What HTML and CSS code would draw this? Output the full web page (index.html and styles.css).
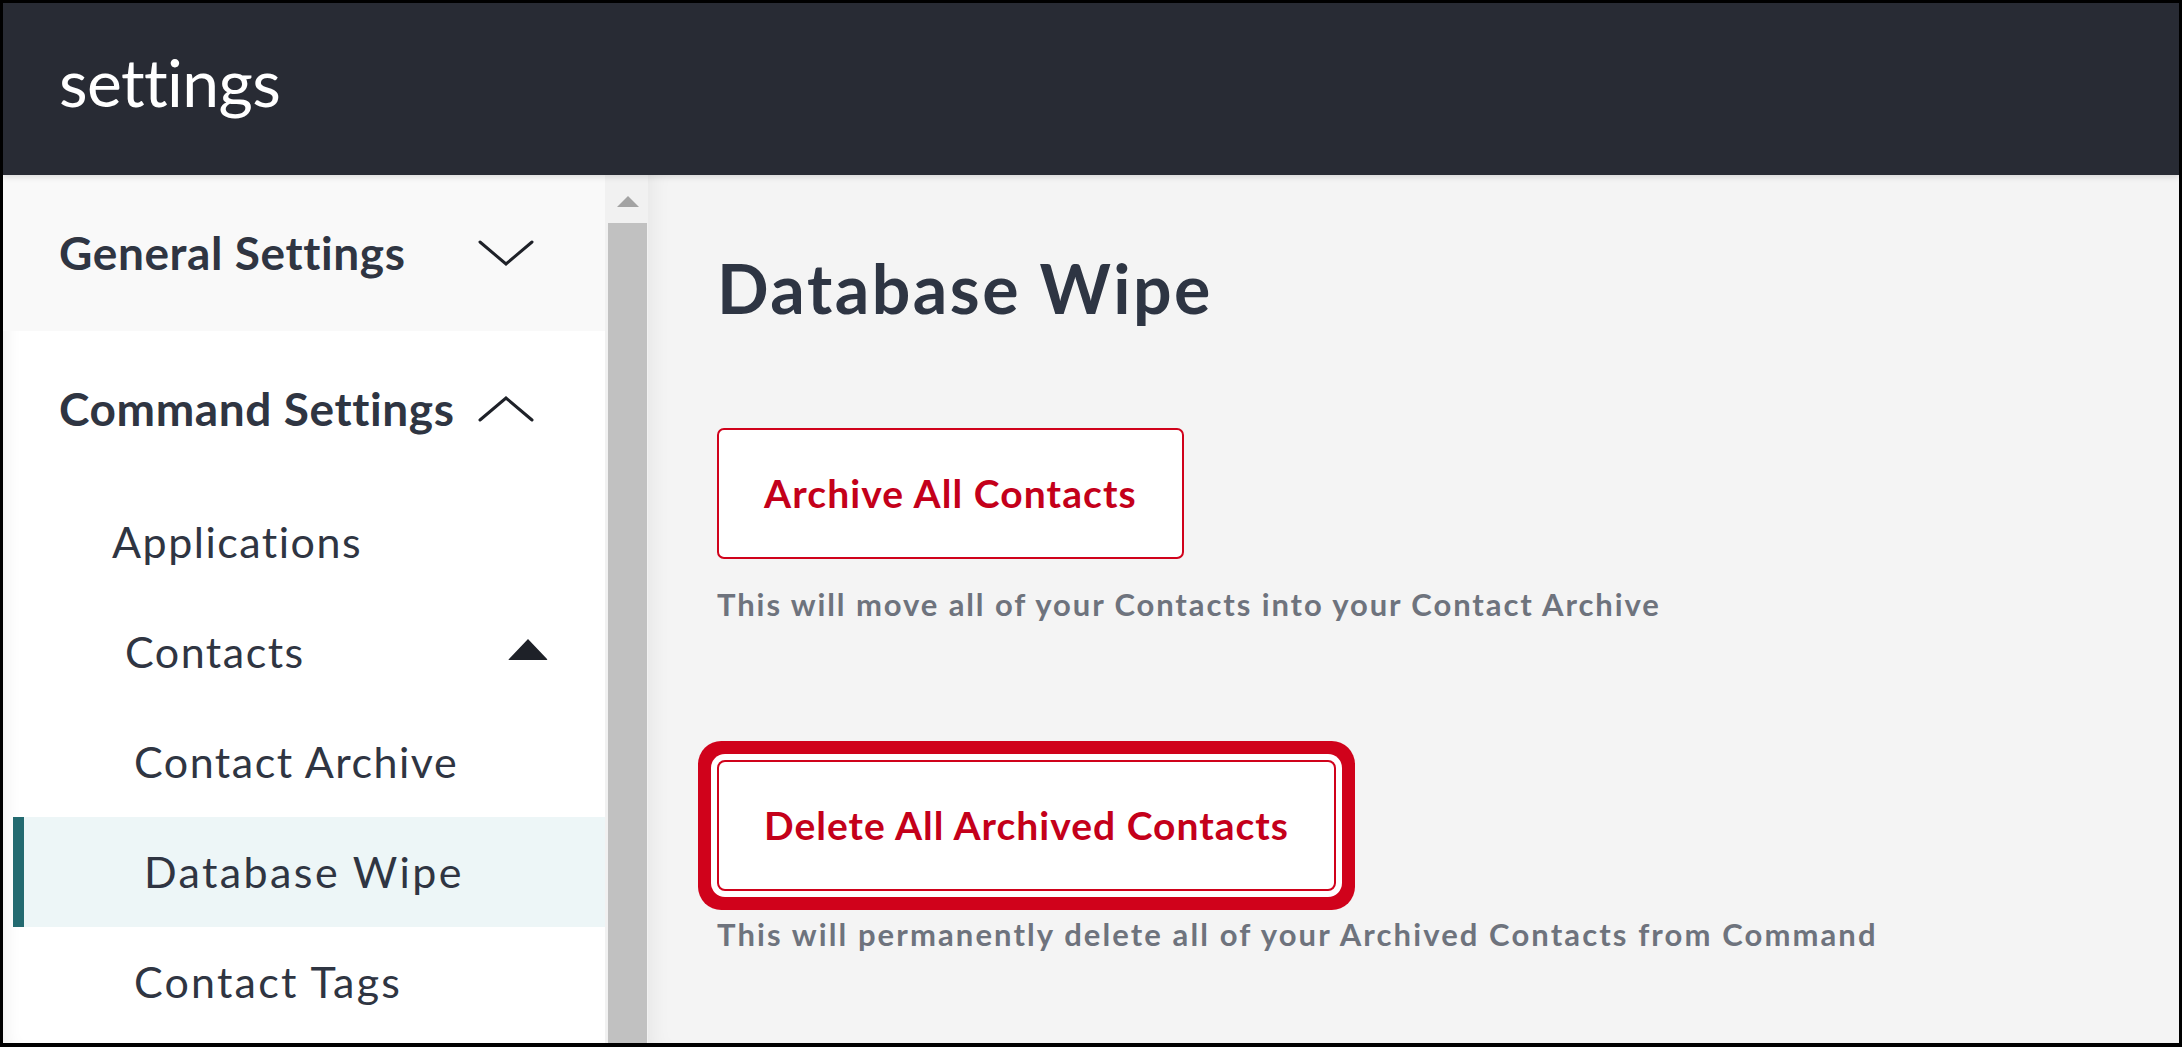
FILE: index.html
```html
<!DOCTYPE html>
<html lang="en">
<head>
<meta charset="utf-8">
<title>settings</title>
<link rel="stylesheet" href="styles.css">
</head>
<body>
<div class="frame">
  <header class="topbar">
    <h1 class="topbar-title">settings</h1>
  </header>
  <div class="body">
    <nav class="sidebar">
      <div class="group group-general">
        <span class="group-title">General Settings</span>
        <svg class="chev" viewBox="0 0 56 26" aria-hidden="true"><polyline points="2,2 28,24 54,2"/></svg>
      </div>
      <div class="group group-command">
        <span class="group-title">Command Settings</span>
        <svg class="chev" viewBox="0 0 56 26" aria-hidden="true"><polyline points="2,24 28,2 54,24"/></svg>
      </div>
      <div class="item item-apps">Applications</div>
      <div class="item item-contacts">
        <span>Contacts</span>
        <svg class="tri" viewBox="0 0 42 23" aria-hidden="true"><path d="M21 1 L40 21 Q41 22 39.5 22 L2.5 22 Q1 22 2 21 Z"/></svg>
      </div>
      <div class="item item-sub">Contact Archive</div>
      <div class="item item-sub item-active">Database Wipe</div>
      <div class="item item-sub item-tags">Contact Tags</div>
    </nav>
    <div class="scrollbar">
      <div class="scroll-up"></div>
      <div class="scroll-thumb"></div>
    </div>
    <main class="main">
      <h2 class="page-title">Database Wipe</h2>
      <button class="action-btn btn-archive">Archive All Contacts</button>
      <p class="action-desc">This will move all of your Contacts into your Contact Archive</p>
      <button class="action-btn btn-delete">Delete All Archived Contacts</button>
      <p class="action-desc desc-delete">This will permanently delete all of your Archived Contacts from Command</p>
    </main>
  </div>
</div>
</body>
</html>
```

FILE: styles.css
```css
* { box-sizing: border-box; }

html, body {
  margin: 0;
  padding: 0;
  background: #000;
}

body {
  font-family: "Lato", "Liberation Sans", sans-serif;
  line-height: 1.2;
}

.frame {
  width: 2182px;
  height: 1047px;
  border: 3px solid #000;
  border-bottom-width: 4px;
  display: flex;
  flex-direction: column;
  overflow: hidden;
  background: #f4f4f4;
}

.topbar {
  height: 172px;
  flex: none;
  background: #282b34;
  padding: 39px 0 0 56px;
  position: relative;
  z-index: 2;
  box-shadow: 0 2px 6px rgba(0, 0, 0, 0.12);
}

.topbar-title {
  margin: 0;
  font-size: 66px;
  font-weight: 400;
  color: #ffffff;
  letter-spacing: -0.6px;
}

.body {
  flex: 1;
  display: flex;
  min-height: 0;
}

.sidebar {
  width: 602px;
  flex: none;
  background: #ffffff;
  box-shadow: inset 14px 0 18px -12px rgba(0, 0, 0, 0.08);
  color: #2f3542;
}

.group {
  display: grid;
  grid-template-columns: 419px 56px;
  align-items: center;
  padding-left: 56px;
}

.group-general {
  height: 156px;
  background: #f9f9f9;
}

.group-command {
  height: 156px;
}

.group-title {
  font-size: 46px;
  font-weight: 700;
  letter-spacing: 0.6px;
  white-space: nowrap;
}

.chev {
  width: 56px;
  height: 26px;
  display: block;
}

.chev polyline {
  fill: none;
  stroke: #1e2128;
  stroke-width: 3;
  stroke-linecap: round;
  stroke-linejoin: miter;
}

.item {
  height: 110px;
  display: flex;
  align-items: center;
  font-size: 43px;
  font-weight: 400;
  letter-spacing: 1.5px;
  color: #2f3542;
  white-space: nowrap;
}

.item-apps {
  padding-left: 109px;
}

.item-contacts {
  display: grid;
  grid-template-columns: 382px 42px;
  align-items: center;
  padding-left: 122px;
}

.tri {
  width: 42px;
  height: 23px;
  display: block;
  margin-top: -6px;
}

.tri path {
  fill: #1e2128;
}

.item-sub {
  padding-left: 131px;
}

.item-tags {
  letter-spacing: 2.2px;
}

.item-active {
  margin-left: 10px;
  padding-left: 120px;
  background: #edf6f7;
  border-left: 11px solid #236a70;
  letter-spacing: 2.4px;
}

.scrollbar {
  width: 43px;
  flex: none;
  background: #f1f1f1;
  padding-left: 3px;
  display: flex;
  flex-direction: column;
  align-items: flex-start;
}

.scroll-up {
  width: 0;
  height: 0;
  margin: 21px 0 0 9px;
  border-left: 11px solid transparent;
  border-right: 11px solid transparent;
  border-bottom: 11px solid #a3a3a3;
}

.scroll-thumb {
  width: 39px;
  flex: 1;
  margin-top: 16px;
  background: #c1c1c1;
}

.main {
  flex: 1;
  background: #f4f4f4;
  padding: 72px 0 0 69px;
  box-shadow: inset 18px 0 22px -16px rgba(0, 0, 0, 0.07);
  display: flex;
  flex-direction: column;
  align-items: flex-start;
}

.page-title {
  margin: 0 0 99px;
  font-size: 68px;
  font-weight: 700;
  color: #2e3543;
  letter-spacing: 2.5px;
}

.action-btn {
  height: 131px;
  padding: 0 45px;
  background: #ffffff;
  border: 2px solid #d0021b;
  border-radius: 7px;
  font-family: "Lato", "Liberation Sans", sans-serif;
  font-size: 39px;
  font-weight: 700;
  color: #c4001a;
  letter-spacing: 1.1px;
  cursor: pointer;
}

.btn-delete {
  margin-top: 0;
  letter-spacing: 1px;
  box-shadow: 0 0 0 6px #ffffff, 0 0 0 19px #d0021b;
  border-radius: 8px;
}

.action-desc {
  margin: 27px 0 137px;
  font-size: 31px;
  font-weight: 700;
  color: #6e737d;
  letter-spacing: 1.9px;
  white-space: nowrap;
}

.desc-delete {
  margin-top: 25px;
  margin-bottom: 0;
  letter-spacing: 2.1px;
}
```
